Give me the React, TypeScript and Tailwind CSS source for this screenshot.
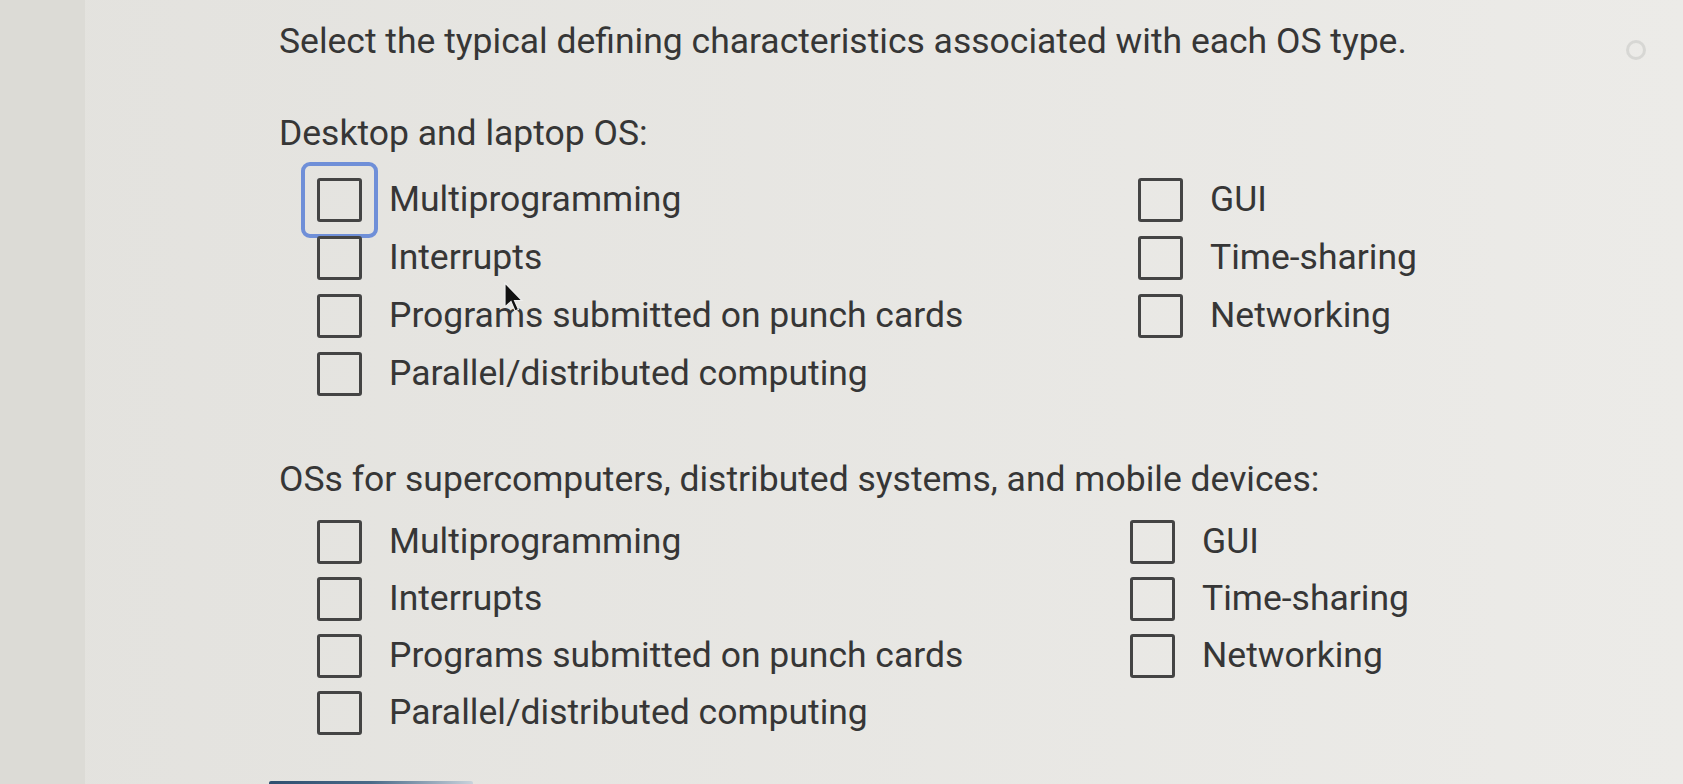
import React from 'react'

const leftOptions = [
  'Multiprogramming',
  'Interrupts',
  'Programs submitted on punch cards',
  'Parallel/distributed computing',
]
const rightOptions = ['GUI', 'Time-sharing', 'Networking']

function Option({ label, focused, tight }: { label: string; focused?: boolean; tight?: boolean }) {
  return (
    <label className={`flex items-center gap-[27px] ${tight ? 'h-[57px]' : 'h-[58px]'}`}>
      <span className="relative block h-[44px] w-[45px] shrink-0">
        <span className="block h-full w-full rounded-[3px] border-[3px] border-[#444]" />
        {focused && (
          <span className="absolute -inset-[16px] rounded-[9px] border-[4px] border-[#6f8fd8]" />
        )}
      </span>
      <span className="whitespace-nowrap">{label}</span>
    </label>
  )
}

function Question({
  title,
  focusFirst,
  narrow,
}: {
  title: string
  focusFirst?: boolean
  narrow?: boolean
}) {
  return (
    <section>
      <h2 className="leading-[35px]">{title}</h2>
      <div
        className={`grid pl-[38px] ${
          narrow ? 'mt-[16px] grid-cols-[813px_1fr]' : 'mt-[20px] grid-cols-[821px_1fr]'
        }`}
      >
        <div className="flex flex-col">
          {leftOptions.map((o, i) => (
            <Option key={o} label={o} focused={focusFirst && i === 0} tight={narrow} />
          ))}
        </div>
        <div className="flex flex-col">
          {rightOptions.map((o) => (
            <Option key={o} label={o} tight={narrow} />
          ))}
        </div>
      </div>
    </section>
  )
}

export default function App() {
  return (
    <div
      className="relative flex h-[784px] w-[1683px] overflow-hidden bg-gradient-to-r from-[#e3e2de] to-[#ecebe8] text-[35.5px] text-[#363636]"
      style={{ fontFamily: 'Roboto, "Liberation Sans", sans-serif' }}
    >
      <div className="h-full w-[85px] shrink-0 bg-[#dcdbd6]" />
      <main className="flex flex-1 flex-col pl-[194px] pt-[24px]">
        <h1 className="leading-[35px]">
          Select the typical defining characteristics associated with each OS type.
        </h1>
        <div className="mt-[57px]">
          <Question title="Desktop and laptop OS:" focusFirst />
        </div>
        <div className="mt-[59px]">
          <Question title="OSs for supercomputers, distributed systems, and mobile devices:" narrow />
        </div>
        <div className="mt-auto h-[3px] w-[204px] -translate-x-[10px] rounded-t-[2px] bg-gradient-to-r from-[#2f4f70] via-[#4a6a88] to-[#c9d3dc]" />
      </main>

      {/* mouse pointer */}
      <svg className="absolute left-[503px] top-[282px]" width="22" height="32" viewBox="0 0 22 32">
        <path d="M2 1 L2 25 L8 19.5 L12 29 L15.5 27.5 L11.5 18.5 L19 18.5 Z" fill="#111" stroke="#eee" strokeWidth="1.2" />
      </svg>

      {/* smudge top right */}
      <div className="absolute left-[1626px] top-[40px] h-[20px] w-[20px] rounded-full border-[3px] border-[#cfcfcc] opacity-70" />
    </div>
  )
}
